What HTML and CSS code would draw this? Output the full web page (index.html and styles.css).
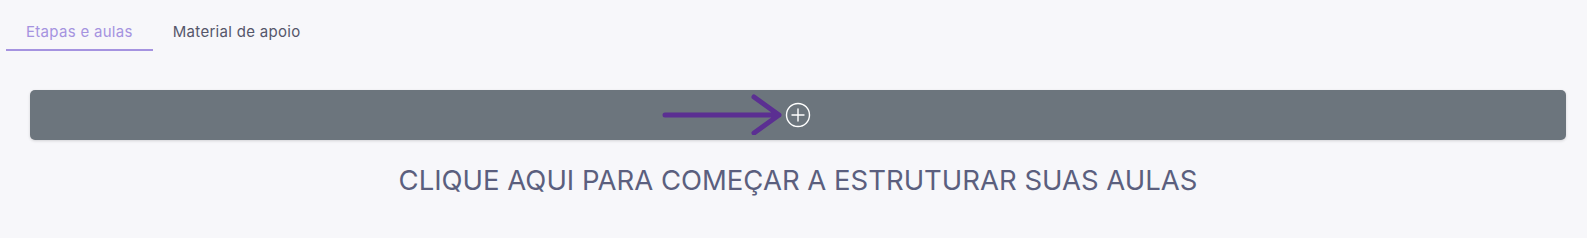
FILE: index.html
```html
<!DOCTYPE html>
<html lang="pt-BR">
<head>
  <meta charset="UTF-8"/>
  <title>Etapas e aulas</title>
  <link rel="stylesheet" href="styles.css">
</head>
<body>

  <nav class="tabs">
    <a class="tab active" href="#">Etapas e aulas</a>
    <a class="tab" href="#">Material de apoio</a>
  </nav>

  <div class="content">
    <button class="add-bar">
      <span class="arrow">
        <svg width="124" height="42" viewBox="0 0 124 42">
          <path d="M3 22 H117 M92 4 L117 22 L92 40" fill="none" stroke="#5b2f92" stroke-width="5" stroke-linecap="round" stroke-linejoin="round"/>
        </svg>
      </span>
      <svg class="plus" width="26" height="26" viewBox="0 0 26 26">
        <circle cx="13" cy="13" r="11.5" fill="none" stroke="#fff" stroke-width="1.4"/>
        <path d="M13 7 V19 M7 13 H19" stroke="#fff" stroke-width="1.4" stroke-linecap="round"/>
      </svg>
    </button>
    <p class="hint">CLIQUE AQUI PARA COMEÇAR A ESTRUTURAR SUAS AULAS</p>
  </div>

</body>
</html>
```

FILE: styles.css
```css
* {
  margin: 0; padding: 0;
  box-sizing: border-box;
  font-family: Inter, 'Noto Sans', sans-serif;
}

html, body {
  overflow: hidden;
}

body {
  background: #f7f7fa;
  color: #5a5e7a;
}

.tabs {
  display: flex;
  padding: 16px 0 0 6px;
}

.tab {
  display: block;
  padding: 6px 20px 8px;
  font-size: 15px;
  letter-spacing: 0.3px;
  color: #55566a;
  text-decoration: none;
  border-bottom: 2px solid transparent;
}

.tab.active {
  color: #a593e0;
  border-bottom-color: #a593e0;
}

.content {
  padding: 39px 21px 0 30px;
}

.add-bar {
  position: relative;
  display: flex;
  justify-content: center;
  align-items: center;
  width: 100%;
  height: 50px;
  background: #6c757d;
  border: none;
  border-radius: 5px;
  box-shadow: 0 1px 3px rgba(0,0,0,0.15);
  cursor: pointer;
}

.arrow {
  position: absolute;
  left: 50%;
  margin-left: -136px;
  top: 3px;
  line-height: 0;
}

.plus {
  display: block;
}

.hint {
  margin-top: 23px;
  text-align: center;
  font-size: 27.5px;
  color: #5b5f7e;
}
```
